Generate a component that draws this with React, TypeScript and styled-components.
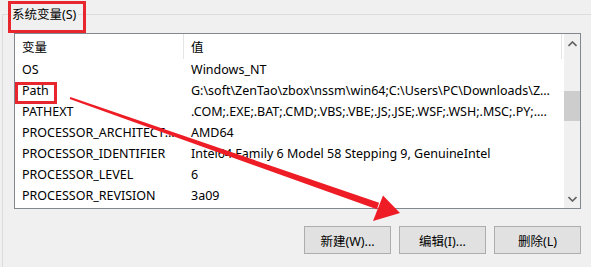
import React from 'react';
import styled, { createGlobalStyle } from 'styled-components';

const GlobalStyle = createGlobalStyle`
  html, body {
    margin: 0;
    padding: 0;
    background: #f0f0f0;
  }
  body {
    font-family: "Noto Sans", "Noto Sans CJK SC", sans-serif;
    font-size: 12px;
    color: #000;
  }
`;

type Row = { name: string; value: string };

const rows: Row[] = [
  { name: 'OS', value: 'Windows_NT' },
  {
    name: 'Path',
    value: 'G:\\soft\\ZenTao\\zbox\\nssm\\win64;C:\\Users\\PC\\Downloads\\ZenTao\\bin',
  },
  {
    name: 'PATHEXT',
    value: '.COM;.EXE;.BAT;.CMD;.VBS;.VBE;.JS;.JSE;.WSF;.WSH;.MSC;.PY;.PYW',
  },
  { name: 'PROCESSOR_ARCHITECTURE', value: 'AMD64' },
  {
    name: 'PROCESSOR_IDENTIFIER',
    value: 'Intel64 Family 6 Model 58 Stepping 9, GenuineIntel',
  },
  { name: 'PROCESSOR_LEVEL', value: '6' },
  { name: 'PROCESSOR_REVISION', value: '3a09' },
];

const App = (): JSX.Element => {
  return (
    <Page>
      <GlobalStyle />
      <GroupBox>
        <Legend>系统变量(S)</Legend>
        <ListView>
          <Table>
            <Header>
              <HeadCell $width={169}>变量</HeadCell>
              <HeadCell $width={378}>值</HeadCell>
            </Header>
            {rows.map((row) => (
              <TableRow key={row.name}>
                <Cell $width={169}>{row.name}</Cell>
                <Cell $width={378}>{row.value}</Cell>
              </TableRow>
            ))}
          </Table>
          <ScrollBar>
            <Arrow>
              <svg width="9" height="6" viewBox="0 0 9 6">
                <path d="M0.5 5 L4.5 1 L8.5 5" fill="none" stroke="#606060" strokeWidth="1.6" />
              </svg>
            </Arrow>
            <Track>
              <Thumb />
            </Track>
            <Arrow>
              <svg width="9" height="6" viewBox="0 0 9 6">
                <path d="M0.5 1 L4.5 5 L8.5 1" fill="none" stroke="#606060" strokeWidth="1.6" />
              </svg>
            </Arrow>
          </ScrollBar>
        </ListView>
        <ButtonRow>
          <Button>新建(W)...</Button>
          <Button>编辑(I)...</Button>
          <Button>删除(L)</Button>
        </ButtonRow>
      </GroupBox>

      {/* red annotations drawn over the screenshot */}
      <Mark $x={8} $y={1} $w={78} $h={32} />
      <Mark $x={15} $y={82} $w={42} $h={22} />
      <Overlay width="591" height="267" viewBox="0 0 591 267">
        <polygon
          points="69.7,99 70.3,97 379.1,202.7 376.9,209.3"
          fill="#ee1c25"
        />
        <polygon points="400,213 383,195.5 373,221" fill="#ee1c25" />
      </Overlay>
    </Page>
  );
};

const Page = styled.div`
  position: relative;
  width: 591px;
  height: 267px;
  overflow: hidden;
  padding: 14px 0 0 2px;
  box-sizing: border-box;
`;

const GroupBox = styled.div`
  position: relative;
  width: 620px;
  height: 300px;
  border: 1px solid #dcdcdc;
  box-sizing: border-box;
  padding: 18px 0 0 11px;
`;

const Legend = styled.div`
  position: absolute;
  top: -9px;
  left: 7px;
  padding: 0 2px;
  background: #f0f0f0;
  font-size: 12.5px;
  line-height: 17px;
`;

const ListView = styled.div`
  display: flex;
  width: 567px;
  height: 176px;
  border: 1px solid #828790;
  box-sizing: border-box;
  background: #fff;
`;

const Table = styled.div`
  flex: 1;
  display: flex;
  flex-direction: column;
  overflow: hidden;
`;

const Header = styled.div`
  display: flex;
  height: 25px;
  flex-shrink: 0;
`;

const HeadCell = styled.div<{ $width: number }>`
  width: ${(p) => p.$width}px;
  flex-shrink: 0;
  box-sizing: border-box;
  padding: 0 0 1px 7px;
  display: flex;
  align-items: center;
  border-right: 1px solid #e5e5e5;
  font-size: 12.5px;
`;

const TableRow = styled.div`
  display: flex;
  height: 21px;
  flex-shrink: 0;
  align-items: center;
`;

const Cell = styled.div<{ $width: number }>`
  width: ${(p) => p.$width}px;
  flex-shrink: 1;
  min-width: 0;
  box-sizing: border-box;
  padding: 0 8px 0 7px;
  white-space: nowrap;
  overflow: hidden;
  text-overflow: ellipsis;
  font-size: 12.5px;
  line-height: 21px;
`;

const ScrollBar = styled.div`
  width: 16px;
  flex-shrink: 0;
  display: flex;
  flex-direction: column;
  background: #f0f0f0;
`;

const Arrow = styled.div`
  height: 19px;
  display: flex;
  align-items: center;
  justify-content: center;
`;

const Track = styled.div`
  flex: 1;
  padding-top: 38px;
`;

const Thumb = styled.div`
  height: 30px;
  background: #cdcdcd;
`;

const ButtonRow = styled.div`
  display: flex;
  gap: 8px;
  width: 567px;
  justify-content: flex-end;
  margin-top: 17px;
`;

const Button = styled.button`
  width: 87px;
  height: 28px;
  border: 1px solid #adadad;
  background: #e1e1e1;
  font-family: "Noto Sans", "Noto Sans CJK SC", sans-serif;
  font-size: 12.5px;
  color: #000;
  padding: 0;
`;

const Mark = styled.div<{ $x: number; $y: number; $w: number; $h: number }>`
  position: absolute;
  left: ${(p) => p.$x}px;
  top: ${(p) => p.$y}px;
  width: ${(p) => p.$w}px;
  height: ${(p) => p.$h}px;
  border: 3px solid #e8262d;
  box-sizing: border-box;
`;

const Overlay = styled.svg`
  position: absolute;
  left: 0;
  top: 0;
  pointer-events: none;
`;

export default App;
